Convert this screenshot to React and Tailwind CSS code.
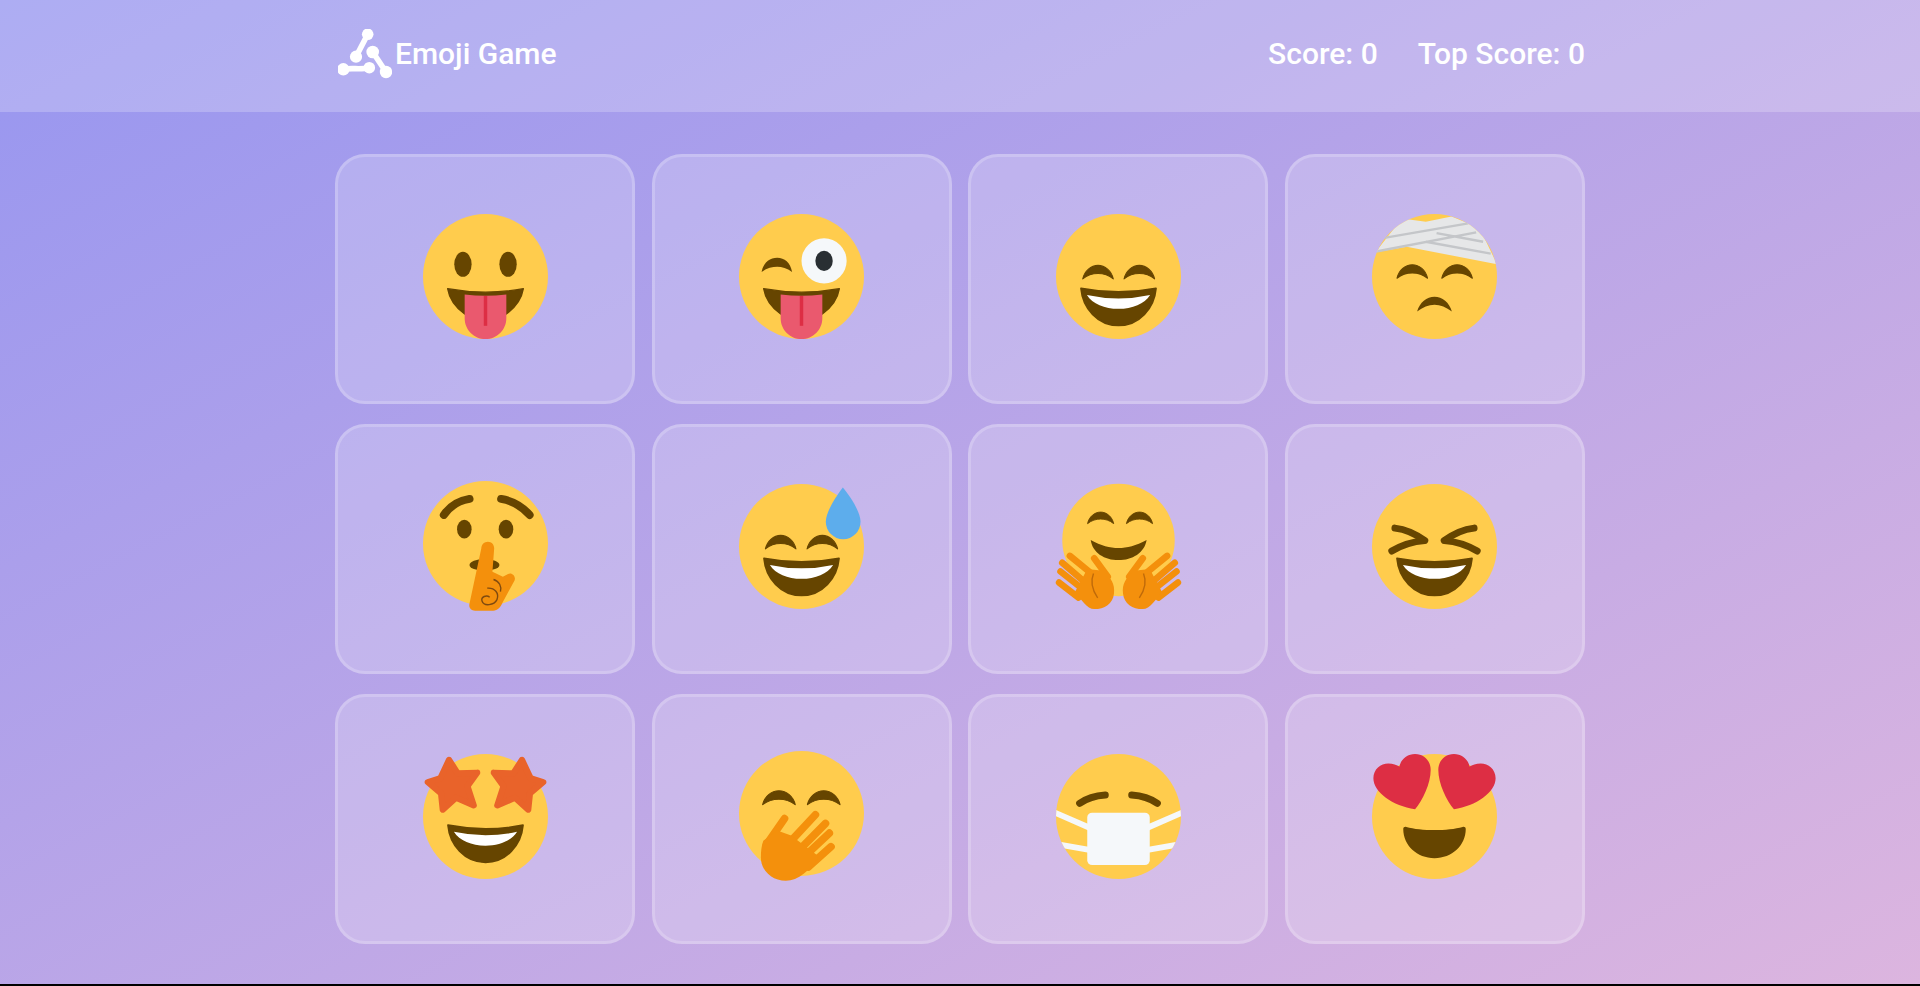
import React from 'react';

const YELLOW = '#FFCC4D';
const BROWN = '#664500';
const ORANGE = '#F4900C';

const Face = ({ cx = 18, cy = 18, r = 18 }) => <circle cx={cx} cy={cy} r={r} fill={YELLOW} />;

// closed happy eye, local box 9 x 4
const Arc = ({ x, y, w = 9, h = 4.1 }) => (
  <path
    transform={`translate(${x} ${y}) scale(${w / 9} ${h / 4})`}
    fill={BROWN}
    stroke={BROWN}
    strokeWidth=".3"
    strokeLinejoin="round"
    d="M.1 3.900C.6 1.600 2.500.1 4.500.1S8.400 1.600 8.900 3.900C7.500 2.800 6 2.400 4.500 2.400S1.500 2.800.1 3.900z"
  />
);

const BigMouth = ({ dy = 0 }) => (
  <g transform={`translate(0 ${dy + 0.3})`}>
    <path fill={BROWN} stroke={BROWN} strokeWidth=".5" strokeLinejoin="round" d="M7.200 21.100Q18 23.200 28.800 21.100C28.300 26.800 24 31.800 18 31.800S7.700 26.800 7.200 21.100z" />
    <path fill="#fff" d="M8.900 23Q18 25 27.100 23C25.500 25.600 22 27 18 27S10.500 25.600 8.900 23z" />
  </g>
);

const Tongue = () => (
  <>
    <path fill={BROWN} stroke={BROWN} strokeWidth=".4" strokeLinejoin="round" d="M7.100 21.500Q18 23.500 28.900 21.500C28.400 24.500 26.500 27 24 28.800H12C9.500 27 7.600 24.500 7.100 21.500z" />
    <path fill="#EA596E" d="M12 23.200Q18 23.900 24 23.200V30C24 33.300 21.300 36 18 36S12 33.300 12 30z" />
    <rect x="17.500" y="23.600" width="1" height="8.600" fill="#DD2E44" />
  </>
);

const Svg = ({ children }) => (
  <svg viewBox="0 0 36 36" className="w-[125px] h-[125px] overflow-visible block">
    {children}
  </svg>
);

const Stuck = () => (
  <Svg>
    <Face />
    <ellipse cx="11.500" cy="14.500" rx="2.500" ry="3.600" fill={BROWN} />
    <ellipse cx="24.500" cy="14.500" rx="2.500" ry="3.600" fill={BROWN} />
    <Tongue />
  </Svg>
);

const Wink = () => (
  <Svg>
    <Face />
    <path fill={BROWN} d="M6.500 16.700C7 14 8.900 12.600 11 12.600S14.800 14 15.300 16.700C13.800 15.600 12.400 15.200 11 15.200S8 15.600 6.500 16.700z" />
    <ellipse cx="24.500" cy="13.500" rx="6.500" ry="6.500" fill="#F5F8FA" />
    <ellipse cx="24.500" cy="13.500" rx="2.500" ry="2.900" fill="#292F33" />
    <Tongue />
  </Svg>
);

const Smile = () => (
  <Svg>
    <Face />
    <Arc x={7.600} y={14.700} />
    <Arc x={19.500} y={14.700} />
    <BigMouth />
  </Svg>
);

const Bandage = () => (
  <Svg>
    <defs>
      <clipPath id="bandage-clip">
        <circle cx="18" cy="18" r="18" />
      </clipPath>
    </defs>
    <Face />
    <g clipPath="url(#bandage-clip)">
      <path fill="#E6E7E8" d="M1 11L8.600 1.300 15.500 2.200 22.900.7 31 4 36 14.500 10 9.400z" />
      <path stroke="#C4C6C9" strokeWidth=".7" fill="none" d="M1.200 10.800L30 5.300M2.300 7.100L27.700 2.700M15.500 8L34.200 11.400M18.600 5.500L32 8" />
    </g>
    <Arc x={7.100} y={14.500} />
    <Arc x={20} y={14.500} />
    <path fill={BROWN} d="M13 28.100C13.700 25.400 15.800 23.800 18 23.800S22.300 25.400 23 28.100C21.400 26.800 19.700 26.100 18 26.100S14.600 26.800 13 28.100z" />
  </Svg>
);

const Shush = () => (
  <Svg>
    <Face cy={17.100} />
    <path fill="none" stroke={BROWN} strokeWidth="2.300" strokeLinecap="round" d="M6 8.900Q8.600 5.100 13.400 4.300M22.500 4.300Q27.300 5.100 30.700 8.900" />
    <ellipse cx="11.900" cy="13" rx="2.100" ry="2.700" fill={BROWN} />
    <ellipse cx="23.900" cy="13" rx="2.100" ry="2.700" fill={BROWN} />
    <ellipse cx="17.700" cy="23.300" rx="4.300" ry="1.700" fill={BROWN} />
    <path fill={ORANGE} d="M16.800 18.500C16.800 17.400 17.700 16.600 18.700 16.600S20.500 17.400 20.500 18.500L20 25.300 23 26.700 24.500 25.900C25.500 25.300 26.800 26.500 26.400 27.700L23 34C22.400 35.500 21.500 36.500 20.200 36.500H15C13.800 36.500 13.100 35.600 13.400 34.400z" />
    <path fill="none" stroke="#7F4A10" strokeWidth=".4" d="M20.300 27.500C22 28 22.700 29.500 22.300 31M18.500 30C20.700 29.800 22 31.500 21.300 33.300 20.500 35 17.500 35.300 17 33.700 16.600 32.500 18.300 31.800 19.200 32.600" />
  </Svg>
);

const Sweat = () => (
  <Svg>
    <Face />
    <Arc x={7.500} y={14.700} />
    <Arc x={19.500} y={14.700} />
    <BigMouth />
    <path fill="#5DADEC" d="M29.900 1C32 3.500 35 8 35 10.900A5 5 0 0 1 25 10.900C25 8 28 3.500 29.900 1z" />
  </Svg>
);

const HugHand = () => (
  <>
    <path fill="none" stroke={ORANGE} strokeWidth="1.900" strokeLinecap="round" d="M4 20.700L9.500 25.200M1.800 22.700L8 28M1.300 25.200L7.500 30.100M.9 28.400L6.500 32.700M11 21.400L14.900 26.700" />
    <path fill={ORANGE} d="M5.500 31L9 24.500 13.500 25C16 27 17 29 16.700 31.500 16.400 34.500 14 36 11 36 9 36 7 33 5.500 31z" />
    <path fill="none" stroke="#BF6A0A" strokeWidth=".4" d="M10.800 25.800C9.900 28 10.200 30.200 12 32.800" />
  </>
);

const Hug = () => (
  <Svg>
    <Face cy={16.100} r={16.200} />
    <Arc x={9} y={8} w={7.700} h={3.500} />
    <Arc x={20.200} y={8} w={7.700} h={3.500} />
    <path fill={BROWN} d="M10 16.100C13 17.800 15.500 18.400 18 18.400S23 17.800 26.100 16.100C25.500 19.800 22 21.900 18 21.900S10.500 19.800 10 16.100z" />
    <HugHand />
    <g transform="translate(36 0) scale(-1 1)">
      <HugHand />
    </g>
  </Svg>
);

const Laugh = () => (
  <Svg>
    <Face />
    <path fill="none" stroke={BROWN} strokeWidth="2" strokeLinecap="round" strokeLinejoin="round" d="M6.600 12.700Q11 13.200 15.200 16.300 10 16.700 5.700 19.300M29.400 12.700Q25 13.200 20.800 16.300 26 16.700 30.300 19.300" />
    <BigMouth />
  </Svg>
);

const Star = ({ flip }) => (
  <polygon
    transform={flip ? 'translate(36 0) scale(-1 1)' : undefined}
    fill="#E9632A"
    stroke="#E9632A"
    strokeWidth="1.800"
    strokeLinejoin="round"
    points="7.500,1.700 10,5.600 15.600,5.400 12.800,9.300 14.600,14.800 9.500,12.600 5.700,16 5.200,11.300 1.400,8.100 5,7"
  />
);

const StarEyes = () => (
  <Svg>
    <Face />
    <BigMouth dy={-.9} />
    <Star />
    <Star flip />
  </Svg>
);

const HandOver = () => (
  <Svg>
    <Face cy={17.100} />
    <Arc x={6.700} y={10.500} w={9.600} h={4.200} />
    <Arc x={19.600} y={10.500} w={9.600} h={4.200} />
    <path fill="none" stroke={ORANGE} strokeWidth="2.200" strokeLinecap="round" d="M13.100 18.600L8 26M22 17.500L15 25M24.900 20L17.500 27.500M26 22.800L19 29.400M26.500 26.700L20 32.500" />
    <path fill={ORANGE} d="M7 25L11 22 15 23.500 23 29.500C20.500 33.500 17 36.500 13.500 36.500 9.500 36.500 6.300 33.500 6.300 29.800 6.300 27.800 6.500 26.500 7 25z" />
  </Svg>
);

const Mask = () => (
  <Svg>
    <defs>
      <clipPath id="mask-clip">
        <circle cx="18" cy="18" r="18" />
      </clipPath>
    </defs>
    <Face />
    <path fill="none" stroke={BROWN} strokeWidth="2" strokeLinecap="round" d="M6.800 14.200Q9.800 12.100 14.200 11.800M21.800 11.800Q26.200 12.100 29.200 14.200" />
    <g clipPath="url(#mask-clip)">
      <path stroke="#F5F8FA" strokeWidth="1.700" fill="none" d="M-1 16.600L10 21.400M37 16.600L26 21.400M1 26.100L10 27.700M35 26.100L26 27.700" />
    </g>
    <rect x="9" y="16.900" width="18" height="15.100" rx="1.400" fill="#F5F8FA" />
  </Svg>
);

const Heart = ({ flip }) => (
  <path
    transform={flip ? 'translate(36 0) scale(-1 1)' : undefined}
    fill="#DD2E44"
    d="M12.400 15.900C6 15 .4 11 .4 7 .4 4.300 2.500 2.700 4.700 2.700 6 2.700 7.200 3.100 7.900 3.600 8.300 1.500 10.200 0 12.400 0 15 0 16.900 2 16.900 4.600 16.900 8.500 14.500 13.500 12.400 15.900z"
  />
);

const HeartEyes = () => (
  <Svg>
    <Face />
    <path fill={BROWN} d="M9 21.600C9 21.100 9.400 20.900 9.900 21 12 21.600 15 21.900 18 21.900S24 21.600 26.100 21C26.600 20.900 27 21.100 27 21.600 27 26.300 23 30 18 30S9 26.300 9 21.600z" />
    <Heart />
    <Heart flip />
  </Svg>
);

// three separate dumbbells
const Logo = () => (
  <svg viewBox="0 0 54 50" className="w-[54px] h-[50px] shrink-0" fill="#fff" stroke="#fff">
    <g strokeWidth="5.600" strokeLinecap="round" fill="none">
      <path d="M29.700 5.300L18 27.700M34.700 23L48 43M5.300 40.300C13 38.500 23 41 31.300 38.700" />
    </g>
    <g stroke="none">
      <circle cx="29.700" cy="5.300" r="5.800" />
      <circle cx="34.700" cy="23" r="6.300" />
      <circle cx="18" cy="27.700" r="6.100" />
      <circle cx="5.300" cy="40.300" r="6.200" />
      <circle cx="31.300" cy="38.700" r="5.800" />
      <circle cx="48" cy="43" r="6.200" />
    </g>
  </svg>
);

const emojis = [Stuck, Wink, Smile, Bandage, Shush, Sweat, Hug, Laugh, StarEyes, HandOver, Mask, HeartEyes];

export default function App() {
  return (
    <div className="h-[986px] bg-black font-['Roboto',sans-serif] overflow-hidden">
      <div className="h-[984px] bg-[linear-gradient(to_bottom_right,#9796f0,#dcb5df)]">
        <header className="h-[112px] bg-white/[0.22]">
          <div className="w-[1250px] mx-auto h-full pb-[4px] flex items-center justify-between text-white text-[30px] font-medium">
            <div className="flex items-center gap-[3px] ml-[3px]">
              <Logo />
              <h1 className="pb-[2px]">Emoji Game</h1>
            </div>
            <div className="flex items-center gap-[40px] pb-[2px]">
              <p>Score: 0</p>
              <p>Top Score: 0</p>
            </div>
          </div>
        </header>
        <main className="w-[1250px] mx-auto pt-[42px] grid grid-cols-[repeat(4,300px)] justify-between gap-y-5">
          {emojis.map((Emoji, i) => (
            <div key={i} className="h-[250px] rounded-[30px] border-[3px] border-white/20 bg-white/20 flex items-center justify-center pb-[6px]">
              <Emoji />
            </div>
          ))}
        </main>
      </div>
    </div>
  );
}
